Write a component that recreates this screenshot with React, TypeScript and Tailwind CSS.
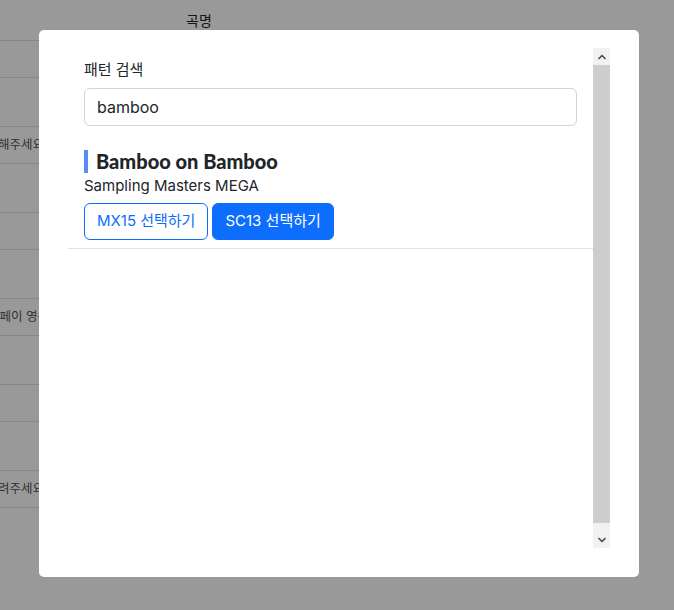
import { ChevronUp, ChevronDown } from "lucide-react";

const rows = [
  { h: "h-[37px]", text: "" },
  { h: "h-[49px]", text: "" },
  { h: "h-[37px]", text: "연주해주세요", end: "w-[44px]" },
  { h: "h-[49px]", text: "" },
  { h: "h-[37px]", text: "" },
  { h: "h-[49px]", text: "" },
  { h: "h-[37px]", text: "카카오페이 영상", end: "w-[49px]" },
  { h: "h-[49px]", text: "" },
  { h: "h-[37px]", text: "" },
  { h: "h-[49px]", text: "" },
  { h: "h-[37px]", text: "들려주세요", end: "w-[44px]" },
];

const PatternResult = () => (
  <div className="border-b border-[#dee2e6] px-4 pt-6 pb-2">
    <div className="flex items-center h-[23px] border-l-4 border-[#5a8cf6] pl-2">
      <h3 className="text-[20px] leading-[23px] font-black text-[#212529] font-['Lato',sans-serif]">
        Bamboo on Bamboo
      </h3>
    </div>
    <p className="mt-[1px] text-[15px] leading-6 text-[#212529]">Sampling Masters MEGA</p>
    <div className="mt-[5px] flex gap-1">
      <button className="h-[37px] px-3 rounded-md border border-[#0d6efd] text-[#0d6efd] text-[15px] bg-white">
        MX15 선택하기
      </button>
      <button className="h-[37px] px-3 rounded-md border border-[#0d6efd] bg-[#0d6efd] text-white text-[15px]">
        SC13 선택하기
      </button>
    </div>
  </div>
);

const App = () => {
  return (
    <div className="relative w-[674px] h-[610px] overflow-hidden bg-white font-['Inter','Noto_Sans_CJK_KR',sans-serif]">
      {/* page behind the dialog */}
      <div className="flex flex-col">
        <div className="h-[41px] border-b border-[#dee2e6] flex justify-center w-[398px] items-center">
          <span className="text-[14px] text-[#212529]">곡명</span>
        </div>
        {rows.map((r, i) => (
          <div key={i} className={`${r.h} w-[60px] border-b border-[#dee2e6] flex items-center`}>
            {r.text && (
              <div className={`${r.end} flex justify-end overflow-hidden whitespace-nowrap`}>
                <span className="text-[12.5px] text-[#555]">{r.text}</span>
              </div>
            )}
          </div>
        ))}
      </div>

      {/* backdrop */}
      <div className="absolute inset-0 bg-black/40" />

      {/* dialog */}
      <div className="absolute left-[39px] top-[30px] w-[600px] h-[547px] bg-white rounded-[5px] pt-[18px] px-[29px] pb-[29px]">
        <div className="flex h-[500px]">
          <div className="flex-1 pt-[10px]">
            <div className="px-4">
              <label className="block text-[15px] leading-6 text-[#212529]">패턴 검색</label>
              <input
                type="text"
                defaultValue="bamboo"
                className="mt-[6px] w-full h-[38px] rounded-md border border-[#ced4da] px-3 text-[16px] text-[#212529] outline-none"
              />
            </div>
            <PatternResult />
          </div>
          {/* scrollbar */}
          <div className="w-[17px] bg-[#f1f1f1] flex flex-col">
            <div className="h-[17px] flex items-center justify-center">
              <ChevronUp className="size-[12px] text-[#505050]" strokeWidth={3.5} />
            </div>
            <div className="h-[458px] bg-[#cdcdcd]" />
            <div className="flex-1 flex items-end">
              <div className="h-[17px] w-full flex items-center justify-center">
                <ChevronDown className="size-[12px] text-[#505050]" strokeWidth={3.5} />
              </div>
            </div>
          </div>
        </div>
      </div>
    </div>
  );
};

export default App;
